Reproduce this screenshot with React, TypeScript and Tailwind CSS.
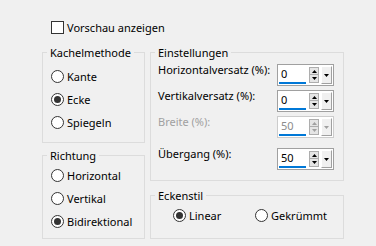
const font = "font-['Noto_Sans','Open_Sans',sans-serif]"

function Radio({ checked }: { checked?: boolean }) {
  return (
    <span className="flex h-[13px] w-[13px] shrink-0 items-center justify-center rounded-full border border-[#333333] bg-white">
      {checked && <span className="h-[7px] w-[7px] rounded-full bg-[#333333]" />}
    </span>
  )
}

function RadioRow({ label, checked }: { label: string; checked?: boolean }) {
  return (
    <div className="flex h-[23px] items-center gap-[3px]">
      <Radio checked={checked} />
      <span className="leading-[15px]">{label}</span>
    </div>
  )
}

function GroupBox({
  title,
  className,
  children,
}: {
  title: string
  className: string
  children: React.ReactNode
}) {
  return (
    <div className={`flex flex-col border border-[#dcdcdc] ${className}`}>
      <div className="-mt-[8px] ml-[4px] w-fit bg-[#f0f0f0] px-[3px] leading-[15px]">{title}</div>
      {children}
    </div>
  )
}

function Triangle({ up, color }: { up?: boolean; color: string }) {
  return (
    <svg width="5" height="3" viewBox="0 0 5 3">
      <path d={up ? 'M2.5 0 L5 3 L0 3 Z' : 'M0 0 L5 0 L2.5 3 Z'} fill={color} />
    </svg>
  )
}

function Spinner({ value, disabled }: { value: string; disabled?: boolean }) {
  const glyph = disabled ? '#a0a0a0' : '#000000'
  return (
    <div
      className={`mt-[2px] flex h-[22px] w-[57px] items-center border bg-white ${
        disabled ? 'border-[#cccccc]' : 'border-[#a0a0a0]'
      }`}
    >
      <div className="ml-[1px] flex h-[18px] w-[27px] flex-col justify-between">
        <span className={`pl-[2px] leading-[15px] ${disabled ? 'text-[#8c8c8c]' : 'text-black'}`}>
          {value}
        </span>
        <span className="h-[2px] bg-[#0078d7]" />
      </div>
      <div className="ml-[3px] flex w-[10px] flex-col">
        <span className="flex h-[8px] items-center justify-center border border-[#adadad] bg-[#e5e5e5]">
          <Triangle up color={glyph} />
        </span>
        <span className="flex h-[8px] items-center justify-center border border-t-0 border-[#adadad] bg-[#e5e5e5]">
          <Triangle color={glyph} />
        </span>
      </div>
      <div className="ml-[2px] flex h-[18px] w-[11px] items-center justify-center border border-t-white border-l-white border-r-[#a0a0a0] border-b-[#a0a0a0] bg-[#f0f0f0]">
        <Triangle color={glyph} />
      </div>
    </div>
  )
}

function SpinRow({
  label,
  value,
  disabled,
  className = '',
}: {
  label: string
  value: string
  disabled?: boolean
  className?: string
}) {
  return (
    <div className={`flex items-start pl-[7px] pr-[9px] ${className}`}>
      <span className={`leading-[15px] ${disabled ? 'text-[#a0a0a0]' : ''}`}>{label}</span>
      <div className="ml-auto">
        <Spinner value={value} disabled={disabled} />
      </div>
    </div>
  )
}

export default function App() {
  return (
    <div className={`h-[246px] w-[376px] bg-[#f0f0f0] pl-[42px] pt-[21px] text-[11px] text-black ${font}`}>
      <label className="ml-[9px] flex h-[13px] items-center gap-[3px]">
        <span className="h-[13px] w-[13px] border border-[#333333] bg-white" />
        <span className="leading-[15px]">Vorschau anzeigen</span>
      </label>

      <div className="mt-[18px] flex gap-[5px]">
        <div className="flex w-[103px] flex-col gap-[12px]">
          <GroupBox title="Kachelmethode" className="h-[91px]">
            <div className="mt-[5px] pl-[8px]">
              <RadioRow label="Kante" />
              <RadioRow label="Ecke" checked />
              <RadioRow label="Spiegeln" />
            </div>
          </GroupBox>
          <GroupBox title="Richtung" className="h-[84px]">
            <div className="mt-[1px] pl-[8px]">
              <RadioRow label="Horizontal" />
              <RadioRow label="Vertikal" />
              <RadioRow label="Bidirektional" checked />
            </div>
          </GroupBox>
        </div>

        <div className="flex w-[194px] flex-col gap-[14px]">
          <GroupBox title="Einstellungen" className="h-[129px]">
            <div className="mt-[2px] flex flex-col gap-[2px]">
              <SpinRow label="Horizontalversatz (%):" value="0" />
              <SpinRow label="Vertikalversatz (%):" value="0" />
              <SpinRow label="Breite (%):" value="50" disabled />
              <SpinRow label="Übergang (%):" value="50" className="mt-[6px]" />
            </div>
          </GroupBox>
          <GroupBox title="Eckenstil" className="h-[44px]">
            <div className="mt-[1px] flex pl-[22px]">
              <div className="w-[82px]">
                <RadioRow label="Linear" checked />
              </div>
              <RadioRow label="Gekrümmt" />
            </div>
          </GroupBox>
        </div>
      </div>
    </div>
  )
}
